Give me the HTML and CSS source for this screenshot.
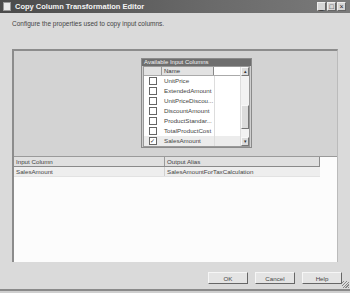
FILE: index.html
```html
<!DOCTYPE html>
<html lang="en">
<head>
  <meta charset="UTF-8" />
  <title>Copy Column Transformation Editor</title>
  <link rel="stylesheet" href="styles.css">
</head>
<body>
  <div class="window">
    <div class="titlebar">
      <span class="app-icon"></span>
      <span class="title">Copy Column Transformation Editor</span>
      <span class="ctl-buttons">
        <span class="ctl">_</span>
        <span class="ctl">&#9633;</span>
        <span class="ctl">&times;</span>
      </span>
    </div>

    <p class="desc">Configure the properties used to copy input columns.</p>

    <div class="content">
      <div class="designer">
        <div class="inputs">
          <div class="inputs-title">Available Input Columns</div>
          <div class="inputs-body">
            <div class="list">
              <div class="list-head">
                <span class="chk-col"></span>
                <span class="name-col">Name</span>
              </div>
              <div class="row"><span class="chk-col"><span class="box"></span></span><span class="name">UnitPrice</span></div>
              <div class="row"><span class="chk-col"><span class="box"></span></span><span class="name">ExtendedAmount</span></div>
              <div class="row"><span class="chk-col"><span class="box"></span></span><span class="name">UnitPriceDiscou...</span></div>
              <div class="row"><span class="chk-col"><span class="box"></span></span><span class="name">DiscountAmount</span></div>
              <div class="row"><span class="chk-col"><span class="box"></span></span><span class="name">ProductStandar...</span></div>
              <div class="row"><span class="chk-col"><span class="box"></span></span><span class="name">TotalProductCost</span></div>
              <div class="row selected"><span class="chk-col"><span class="box checked">&#10003;</span></span><span class="name">SalesAmount</span></div>
            </div>
            <div class="scrollbar">
              <span class="arrow">&#9652;</span>
              <span class="track"><span class="thumb"></span></span>
              <span class="arrow">&#9662;</span>
            </div>
          </div>
        </div>
      </div>

      <div class="grid">
        <div class="grid-head">
          <span class="cell first">Input Column</span>
          <span class="cell">Output Alias</span>
        </div>
        <div class="grid-row">
          <span class="cell first">SalesAmount</span>
          <span class="cell">SalesAmountForTaxCalculation</span>
        </div>
      </div>
    </div>

    <div class="buttons">
      <button>OK</button>
      <button>Cancel</button>
      <button>Help</button>
    </div>
    <span class="grip"></span>
  </div>
</body>
</html>
```

FILE: styles.css
```css
body {
  margin: 0;
  font-family: "Liberation Sans", Arial, sans-serif;
  font-size: 7px;
  color: #333;
  background: #cfcfcf;
}
.window {
  position: relative;
  width: 350px;
  height: 291px;
  background: #dadada;
  border-bottom: 2px solid #8a8a8a;
  box-sizing: border-box;
}
.titlebar {
  height: 13px;
  display: flex;
  align-items: center;
  padding: 0 4px 0 3px;
  background: linear-gradient(to right, #4a4a4a, #6a6a6a 60%, #7a7a7a);
  color: #f4f4f4;
}
.app-icon {
  width: 6px;
  height: 7px;
  background: #e8e8e8;
  border: 1px solid #999;
  margin-right: 4px;
}
.title {
  font-weight: bold;
  font-size: 7.5px;
  flex: 1;
}
.ctl-buttons {
  display: flex;
  gap: 1px;
}
.ctl {
  width: 7px;
  height: 7px;
  background: #d6d6d6;
  border: 1px solid #eee;
  border-right-color: #666;
  border-bottom-color: #666;
  color: #222;
  font-size: 7px;
  line-height: 7px;
  text-align: center;
}
.desc {
  margin: 0;
  padding: 7px 12px 0;
  height: 29px;
  font-size: 6.5px;
  color: #444;
}
.content {
  margin: 0 12px;
  border-top: 2px solid #8c8c8c;
  border-left: 2px solid #8c8c8c;
  border-right: 1px solid #bbb;
  height: 213px;
  box-sizing: border-box;
  display: flex;
  flex-direction: column;
}
.designer {
  height: 106px;
  background: #d3d3d3;
  padding: 7px 0 0 127px;
  box-sizing: border-box;
  border-bottom: 1px solid #9a9a9a;
}
.inputs {
  width: 111px;
  height: 90px;
  border: 1px solid #8a8a8a;
  background: #cfcfcf;
  box-sizing: border-box;
  display: flex;
  flex-direction: column;
}
.inputs-title {
  height: 7px;
  background: #6e6e6e;
  color: #f0f0f0;
  font-size: 6px;
  line-height: 7px;
  padding-left: 2px;
}
.inputs-body {
  flex: 1;
  display: flex;
  margin: 0 1px 1px;
  background: #fff;
  border: 1px solid #999;
}
.list {
  flex: 1;
}
.list-head {
  height: 8px;
  display: flex;
  border-bottom: 1px solid #aaa;
}
.list-head .chk-col {
  background: #e2e2e2;
  border-right: 1px solid #999;
}
.name-col {
  width: 49px;
  background: #e2e2e2;
  border-right: 1px solid #888;
  font-size: 6px;
  line-height: 8px;
  padding-left: 2px;
}
.chk-col {
  width: 17px;
  display: flex;
  align-items: center;
  justify-content: center;
}
.row {
  height: 10px;
  display: flex;
  align-items: center;
  font-size: 6.2px;
  color: #444;
}
.row:first-of-type {
  margin-top: 1px;
}
.row .name {
  width: 50px;
  padding-left: 3px;
  white-space: nowrap;
  overflow: hidden;
  border-right: 1px solid #ddd;
  height: 10px;
  line-height: 10px;
}
.row.selected {
  background: #ececec;
}
.box {
  width: 6px;
  height: 6px;
  border: 1px solid #666;
  background: #fff;
  font-size: 6px;
  line-height: 6px;
  text-align: center;
  color: #333;
}
.scrollbar {
  width: 8px;
  display: flex;
  flex-direction: column;
  background: #f2f2f2;
  border-left: 1px solid #ddd;
}
.arrow {
  height: 7px;
  background: #dcdcdc;
  border: 1px solid #f8f8f8;
  border-right-color: #777;
  border-bottom-color: #777;
  font-size: 5px;
  line-height: 7px;
  text-align: center;
  color: #333;
}
.track {
  flex: 1;
  display: flex;
  flex-direction: column;
  justify-content: flex-end;
  padding-bottom: 8px;
}
.thumb {
  height: 22px;
  background: #dcdcdc;
  border: 1px solid #f8f8f8;
  border-right-color: #777;
  border-bottom-color: #777;
}
.grid {
  flex: 1;
  background: #fcfcfc;
}
.grid-head, .grid-row {
  display: flex;
  width: 306px;
  height: 10px;
  box-sizing: border-box;
  font-size: 6.2px;
  line-height: 9px;
  color: #444;
}
.grid-head {
  background: #e0e0e0;
  border-bottom: 1px solid #8a8a8a;
  border-right: 1px solid #8a8a8a;
}
.grid-row {
  background: #eeeeee;
  border-bottom: 1px solid #e2e2e2;
}
.cell {
  padding-left: 2px;
}
.cell.first {
  width: 151px;
  border-right: 1px solid #9a9a9a;
  box-sizing: border-box;
}
.grid-row .cell.first {
  border-right-color: #d0d0d0;
}
.buttons {
  display: flex;
  justify-content: flex-end;
  gap: 7px;
  padding: 10px 8px 0 0;
}
button {
  width: 40px;
  height: 12px;
  padding: 0;
  font-family: "Liberation Sans", Arial, sans-serif;
  font-size: 6.2px;
  color: #444;
  background: #e4e4e4;
  border: 1px solid #f6f6f6;
  border-right-color: #666;
  border-bottom-color: #666;
}
.grip {
  position: absolute;
  right: 1px;
  bottom: 1px;
  width: 7px;
  height: 7px;
  background: repeating-linear-gradient(135deg, transparent 0 1px, #888 1px 2px);
}
```
